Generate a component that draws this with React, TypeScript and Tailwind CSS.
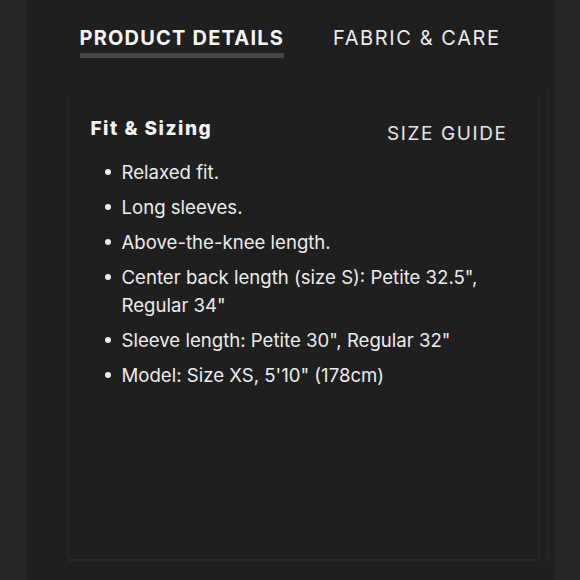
const items = [
  "Relaxed fit.",
  "Long sleeves.",
  "Above-the-knee length.",
  "Center back length (size S): Petite 32.5\", Regular 34\"",
  "Sleeve length: Petite 30\", Regular 32\"",
  "Model: Size XS, 5'10\" (178cm)",
];

export default function App() {
  return (
    <div
      className="w-[580px] h-[580px] bg-[#262626] flex justify-center overflow-hidden"
      style={{ fontFamily: "Inter, 'Noto Sans', sans-serif" }}
    >
      <div className="w-[527px] h-full bg-[#1f1f1f] flex flex-col">
        {/* tabs */}
        <div className="flex items-start pl-[53px] pt-[25px] gap-[49px]">
          <div className="flex flex-col">
            <span className="text-[20px] leading-[26px] font-bold tracking-[1.2px] text-[#f4f4f4]">
              PRODUCT DETAILS
            </span>
            <div className="mt-[2px] h-[5px] bg-[#474747]" />
          </div>
          <span className="text-[20px] leading-[26px] tracking-[1.6px] text-[#ececec]">
            FABRIC &amp; CARE
          </span>
        </div>

        {/* card */}
        <div className="flex ml-[41px] mt-[35px]">
          <div className="w-[471px] h-[466px] bg-[#1f1f1f] border-x border-[#262626] shadow-[0_2px_2px_#2c2c2c] px-[22px] pt-[24px]">
            <div className="flex justify-between items-start">
              <h3 className="text-[19px] leading-[24px] font-extrabold tracking-[1.5px] text-[#f4f4f4]">
                Fit &amp; Sizing
              </h3>
              <span className="mt-[5px] mr-[8px] text-[19px] leading-[24px] tracking-[1.6px] text-[#e6e6e6]">
                SIZE GUIDE
              </span>
            </div>
            <ul className="mt-[12px] pl-[14px] flex flex-col gap-[7px]">
              {items.map((t) => (
                <li key={t} className="flex text-[18.6px] leading-[28px] text-[#ececec]">
                  <span className="w-[17px] shrink-0 flex items-start pt-[11px]">
                    <span className="w-[6px] h-[6px] rounded-full bg-[#ececec]" />
                  </span>
                  <span className="w-[390px]">{t}</span>
                </li>
              ))}
            </ul>
          </div>
          <div className="ml-[8px] w-[3px] h-[466px] border-x border-[#262626] shadow-[0_2px_2px_#2c2c2c]" />
        </div>
      </div>
    </div>
  );
}
